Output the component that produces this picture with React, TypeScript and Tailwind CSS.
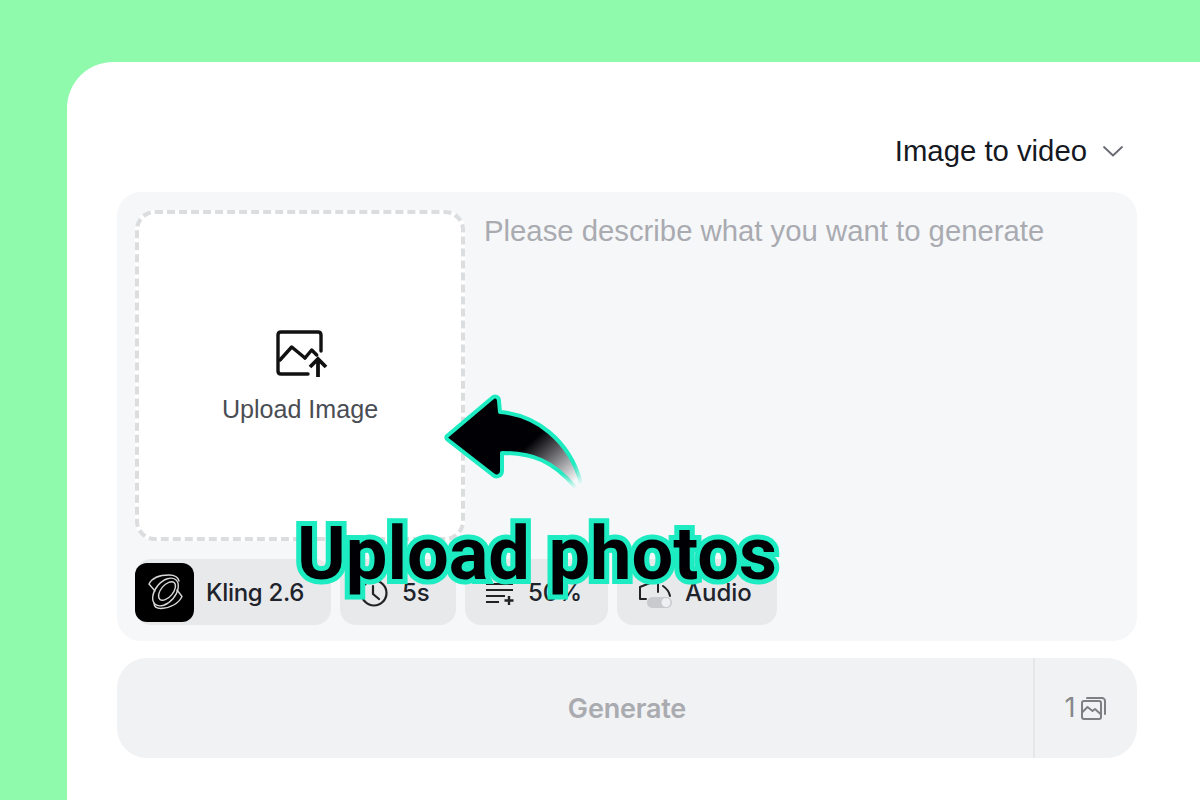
import React from "react";

function KlingLogo() {
  return (
    <svg width="40" height="40" viewBox="0 0 40 40" fill="none" stroke="#d8d8d8" strokeWidth="1.4" strokeLinejoin="round" strokeLinecap="round">
      <path d="M10 18 L4 11 C7 5 15 2 24 2 C30 2 33 4 34 8" />
      <path d="M32 17 L37 23.5 C34 30 26 35 16 35.5 C11 35.5 9 33 9 30" />
      <ellipse cx="20.5" cy="19" rx="16" ry="10" transform="rotate(-50 20.5 19)" />
      <ellipse cx="22" cy="18" rx="11" ry="6" transform="rotate(-50 22 18)" />
    </svg>
  );
}

function UploadImageIcon() {
  return (
    <svg width="50" height="50" viewBox="0 0 50 50" fill="none" stroke="#111" strokeWidth="3.4" strokeLinecap="round" strokeLinejoin="round" className="overflow-visible">
      <path d="M33 45 H6 C4 45 3 44 3 42 V6 C3 4 4 3 6 3 H43 C45 3 46 4 46 6 V22" />
      <path d="M5 31 L16.7 18 L30 29" />
      <path d="M30 29 L36.7 21 L41.7 26" />
      <path d="M43 48 V31 M35 38 L43 30 L51 38" strokeWidth="3.8" strokeLinecap="butt" strokeLinejoin="miter" />
    </svg>
  );
}

function ClockIcon() {
  return (
    <svg width="30" height="30" viewBox="0 0 30 30" fill="none" stroke="#222" strokeWidth="2.2" strokeLinecap="round" strokeLinejoin="round">
      <circle cx="15" cy="15" r="12.5" />
      <path d="M14 8 V16 L20 21" />
    </svg>
  );
}

function ListPlusIcon() {
  return (
    <svg width="32" height="24" viewBox="0 0 32 24" fill="none" stroke="#222" strokeWidth="2">
      <path d="M2 3 H29 M2 9 H29 M2 15 H21 M2 21 H15" />
      <path d="M25 15 V24 M20.5 19.5 H29.5" strokeWidth="2.4" />
    </svg>
  );
}

function AudioIcon() {
  return (
    <svg width="36" height="32" viewBox="0 0 36 32" fill="none">
      <path d="M8 22 H2 V10 L17 4 M20 0 V15 M25 9 C28 11 31 14 32 19" stroke="#222" strokeWidth="2" strokeLinejoin="round" strokeLinecap="round" />
      <rect x="9" y="20" width="25" height="11" rx="5.5" fill="#c8cacd" />
      <circle cx="28" cy="25.5" r="4.5" fill="#eeeff0" />
    </svg>
  );
}

function CreditIcon() {
  return (
    <svg width="26" height="26" viewBox="0 0 26 26" fill="none" stroke="#7d7f83" strokeWidth="2" strokeLinejoin="round" strokeLinecap="round">
      <rect x="2" y="6" width="19" height="18" rx="2" />
      <path d="M7 3 H22 C23.5 3 25 4.5 25 6 V19" />
      <path d="M2.5 17 L7.5 12 L12.5 16 L15 14 L20.5 19" />
    </svg>
  );
}

function Arrow() {
  return (
    <svg width="146" height="106" viewBox="0 0 146 106" fill="none" className="absolute left-[376px] top-[331px]">
      <defs>
        <linearGradient id="fade" x1="80" y1="30" x2="132" y2="88" gradientUnits="userSpaceOnUse">
          <stop offset="0" stopColor="#000005" />
          <stop offset="0.25" stopColor="#000005" />
          <stop offset="1" stopColor="#000005" stopOpacity="0" />
        </linearGradient>
        <linearGradient id="edge" x1="90" y1="40" x2="132" y2="96" gradientUnits="userSpaceOnUse">
          <stop offset="0" stopColor="#1debc1" />
          <stop offset="0.7" stopColor="#1debc1" />
          <stop offset="1" stopColor="#1debc1" stopOpacity="0" />
        </linearGradient>
      </defs>
      <path
        d="M4 43 L49 5 C52 2 56 4 56 8 L57 19 C92 22 126 46 138 90 C139 95 135 99 132 94 C110 68 90 60 59 60 L59 78 C59 83 53 85 50 82 L5 47 C3 46 3 44 4 43 Z"
        fill="url(#fade)"
        stroke="url(#edge)"
        strokeWidth="4"
        strokeLinejoin="round"
      />
    </svg>
  );
}

export default function App() {
  return (
    <div className="h-[800px] w-[1200px] overflow-hidden bg-[#8ff9ac] pl-[67px] pt-[62px] font-['Inter',sans-serif]">
      <div className="relative h-[738px] rounded-tl-[46px] bg-white pl-[50px] pr-[63px]">
        <div className="flex h-[130px] items-center justify-end gap-[15px] pr-[13px] pt-[69px] pb-[21px]">
          <span className="font-['Liberation_Sans',sans-serif] text-[29.3px] leading-none text-[#15181f]">Image to video</span>
          <svg width="22" height="12" viewBox="0 0 22 12" fill="none" stroke="#66696f" strokeWidth="1.8" strokeLinecap="round" strokeLinejoin="round">
            <path d="M2 2 L11 10.5 L20 2" />
          </svg>
        </div>

        <div className="h-[449px] rounded-[24px] bg-[#f6f7f9] p-[18px] pb-[16px]">
          <div className="flex h-[331px] gap-[19px]">
            <div className="flex h-[331px] w-[330px] shrink-0 flex-col items-center rounded-[20px] border-[4px] border-dashed border-[#dcdddf] bg-white pt-[115px]">
              <UploadImageIcon />
              <span className="mt-[18px] font-['Liberation_Sans',sans-serif] text-[25.1px] leading-none text-[#4a4d54]">Upload Image</span>
            </div>
            <div className="pt-[7px] font-['Liberation_Sans',sans-serif] text-[29.3px] leading-[28px] text-[#a9abb1]">
              Please describe what you want to generate
            </div>
          </div>

          <div className="mt-[18px] flex gap-[9px]">
            <div className="relative flex h-[66px] w-[196px] items-center rounded-[16px] bg-[#e8e9eb] pl-[71px] pt-[2px] text-[24px] font-medium tracking-[-0.3px] text-[#20232b]">
              <div className="absolute left-0 top-[4px] flex h-[59px] w-[59px] items-center justify-center rounded-[12px] bg-black">
                <KlingLogo />
              </div>
              Kling 2.6
            </div>
            <div className="flex h-[66px] w-[116px] items-center gap-[13px] rounded-[16px] bg-[#e8e9eb] pl-[19px] pt-[2px] text-[24px] font-medium text-[#20232b]">
              <ClockIcon />
              5s
            </div>
            <div className="flex h-[66px] w-[143px] items-center gap-[12px] rounded-[16px] bg-[#e8e9eb] pl-[19px] pt-[2px] text-[24px] font-medium text-[#20232b]">
              <ListPlusIcon />
              50%
            </div>
            <div className="flex h-[66px] w-[160px] items-center gap-[11px] rounded-[16px] bg-[#e8e9eb] pl-[21px] pt-[2px] text-[24px] font-medium text-[#20232b]">
              <AudioIcon />
              Audio
            </div>
          </div>
        </div>

        <div className="mt-[17px] flex h-[100px] rounded-[30px] bg-[#f1f2f4]">
          <div className="flex flex-1 items-center justify-center pl-[104px] pt-[2px] text-[27px] font-semibold tracking-[-0.2px] text-[#a9abb0]">
            Generate
          </div>
          <div className="flex w-[104px] items-center justify-center gap-[5px] border-l-2 border-[#e6e7e9] pr-[1px] text-[27px] text-[#85878b]">
            1
            <CreditIcon />
          </div>
        </div>

        <Arrow />
        <div className="absolute left-[230px] top-[452px] whitespace-nowrap font-['Roboto',sans-serif] text-[74px] font-bold leading-[80px] text-[#000005] [-webkit-text-stroke:10px_#1debc1] [paint-order:stroke_fill]">
          Upload photos
        </div>
      </div>
    </div>
  );
}
